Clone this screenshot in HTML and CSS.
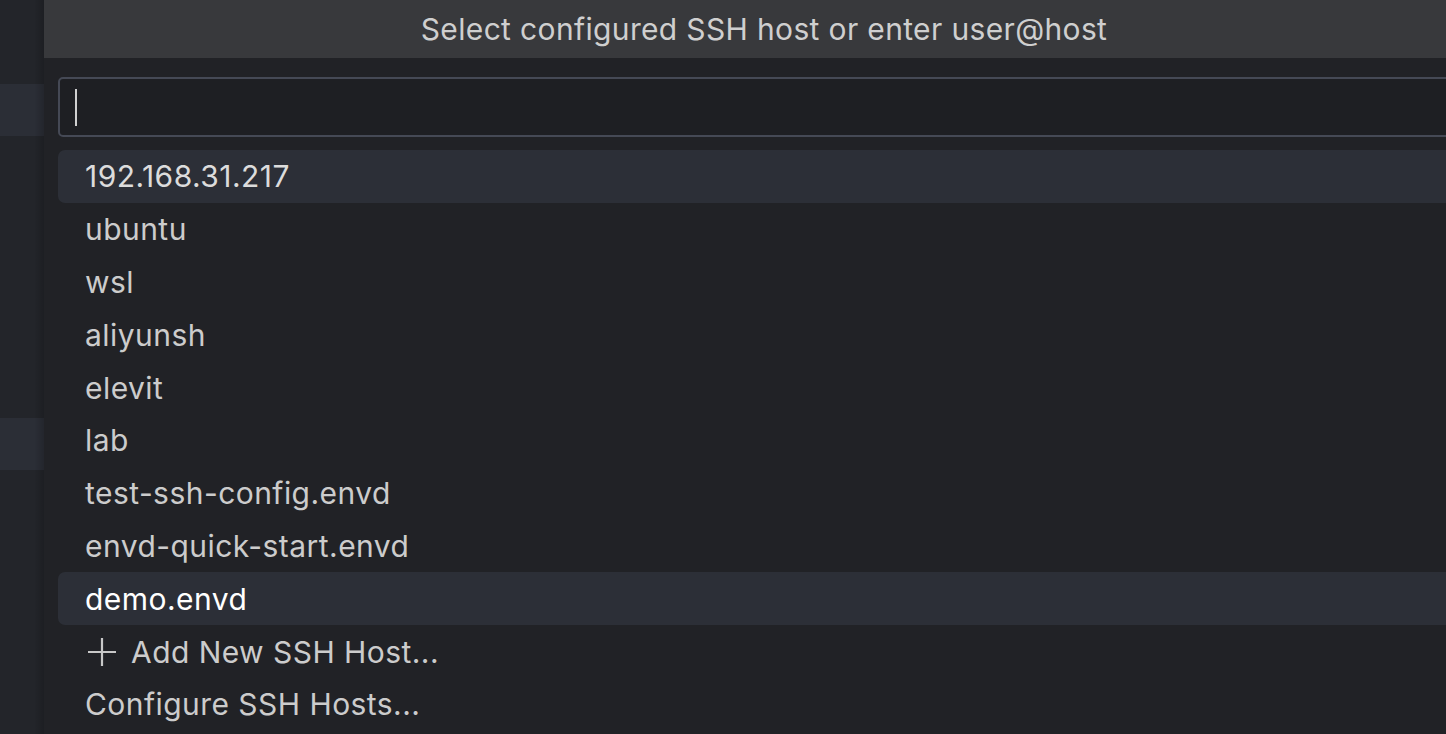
FILE: index.html
```html
<!DOCTYPE html>
<html>
<head>
<meta charset="utf-8">
<link rel="stylesheet" href="styles.css">
</head>
<body>
<div class="app">
  <div class="side">
    <div class="side-band band-1"></div>
    <div class="side-band band-2"></div>
  </div>
  <div class="quick">
    <div class="title">Select configured SSH host or enter user@host</div>
    <div class="body">
      <div class="input"><span class="caret"></span></div>
      <ul class="list">
        <li class="row active">192.168.31.217</li>
        <li class="row">ubuntu</li>
        <li class="row">wsl</li>
        <li class="row">aliyunsh</li>
        <li class="row">elevit</li>
        <li class="row">lab</li>
        <li class="row">test-ssh-config.envd</li>
        <li class="row">envd-quick-start.envd</li>
        <li class="row focus">demo.envd</li>
        <li class="row"><svg class="plus" width="32" height="32" viewBox="0 0 32 32"><path d="M16 2V30M2 16H30" stroke="#c8c8c8" stroke-width="2.2" fill="none"/></svg>Add New SSH Host...</li>
        <li class="row">Configure SSH Hosts...</li>
      </ul>
    </div>
  </div>
</div>
</body>
</html>
```

FILE: styles.css
```css
html, body {
  margin: 0;
  padding: 0;
  width: 1446px;
  height: 734px;
  overflow: hidden;
  background: #23252a;
  font-family: Inter, "Noto Sans", sans-serif;
}
.app {
  display: flex;
  width: 1446px;
  height: 734px;
}
.side {
  width: 44px;
  flex: none;
  background: #23252a;
  position: relative;
}
.side-band {
  position: absolute;
  left: 0;
  width: 44px;
  height: 52px;
  background: #2b2e36;
}
.band-1 { top: 84px; }
.band-2 { top: 418px; }
.side::after {
  content: "";
  position: absolute;
  right: 0;
  top: 0;
  bottom: 0;
  width: 10px;
  background: linear-gradient(to right, rgba(0,0,0,0), rgba(0,0,0,0.18));
}
.quick {
  flex: none;
  width: 1440px;
  background: #212226;
  display: flex;
  flex-direction: column;
}
.title {
  height: 58px;
  background: #38393c;
  color: #cfcfcf;
  font-size: 30px;
  line-height: 58px;
  text-align: center;
  letter-spacing: 0.35px;
}
.body {
  padding: 19px 0 0 14px;
}
.input {
  height: 56px;
  border: 2px solid #454955;
  border-radius: 5px;
  background: #1e1f23;
  display: flex;
  align-items: center;
  padding-left: 15px;
}
.caret {
  width: 2px;
  height: 37px;
  background: #d0d0d0;
}
.list {
  list-style: none;
  margin: 13px 0 0 0;
  padding: 0;
}
.row {
  height: 52.8px;
  display: flex;
  align-items: center;
  padding-left: 27px;
  color: #cccccc;
  font-size: 30px;
  border-radius: 7px;
  letter-spacing: 0.45px;
}
.row.active {
  background: #2c2f37;
  color: #dcdcdc;
}
.row.focus {
  background: #2c2f37;
  color: #ffffff;
}
.plus {
  margin-left: 1px;
  margin-right: 13px;
}
```
